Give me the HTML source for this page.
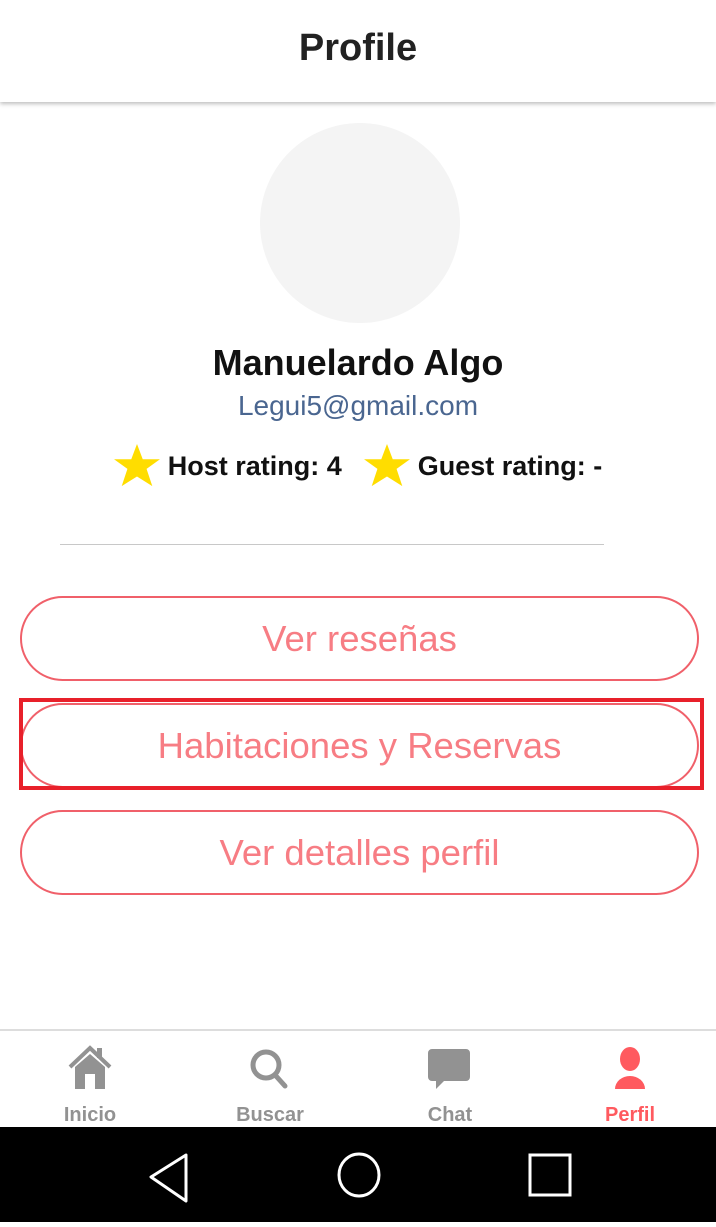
<!DOCTYPE html>
<html><head><meta charset="utf-8"><style>
*{margin:0;padding:0;box-sizing:border-box}
body{width:716px;height:1222px;position:relative;background:#fff;font-family:"Liberation Sans",sans-serif;overflow:hidden}
.hdr{position:absolute;top:0;left:0;width:716px;height:102px;background:#fff;box-shadow:0 2px 4px rgba(0,0,0,.25);text-align:center;line-height:96px;font-size:38px;font-weight:bold;color:#222}
.av{position:absolute;left:260px;top:123px;width:200px;height:200px;border-radius:50%;background:#f4f4f4}
.name{position:absolute;top:342px;width:716px;text-align:center;font-size:36px;font-weight:bold;color:#111}
.mail{position:absolute;top:390px;width:716px;text-align:center;font-size:28px;color:#4a6690}
.rat{position:absolute;top:444px;left:0;width:716px;display:flex;justify-content:center;align-items:center;font-size:27px;font-weight:bold;color:#111}
.rat svg{margin-right:8px}
.hr{position:absolute;left:60px;top:544px;width:544px;height:1px;background:#c8c8c8}
.btn{position:absolute;left:20px;width:679px;height:85px;border:2px solid #f0606a;border-radius:43px;text-align:center;line-height:81px;font-size:36.5px;color:#f77d84}
.sel{position:absolute;left:19px;top:698px;width:685px;height:92px;border:4px solid #e8202a}
.nav{position:absolute;top:1029px;left:0;width:716px;height:98px;border-top:2px solid #ddd;background:#fff}
.it{position:absolute;top:14px;width:120px;text-align:center;font-size:20px;font-weight:bold;color:#929292}
.it svg{display:block;margin:0 auto 13px}
.sys{position:absolute;top:1127px;left:0;width:716px;height:95px;background:#000}
</style></head><body>
<div class="hdr">Profile</div>
<div class="av"></div>
<div class="name">Manuelardo Algo</div>
<div class="mail">Legui5@gmail.com</div>
<div class="rat">
<svg width="46" height="44" viewBox="0 0 24 23"><path d="M12 0l3 8h9l-7 5 3 9-8-5-8 5 3-9-7-5h9z" fill="#ffdd00"/></svg>Host rating: 4<span style="width:22px"></span>
<svg width="46" height="44" viewBox="0 0 24 23"><path d="M12 0l3 8h9l-7 5 3 9-8-5-8 5 3-9-7-5h9z" fill="#ffdd00"/></svg>Guest rating: -
</div>
<div class="hr"></div>
<div class="btn" style="top:596px">Ver reseñas</div>
<div class="btn" style="top:703px">Habitaciones y Reservas</div>
<div class="sel"></div>
<div class="btn" style="top:810px">Ver detalles perfil</div>
<div class="nav">
<div class="it" style="left:30px"><svg width="48" height="46" viewBox="0 0 48 46"><path d="M4 22L24 3l20 19" stroke="#929292" stroke-width="4" fill="none"/><rect x="31" y="3" width="5" height="10" fill="#929292"/><path d="M9 22L24 9l15 13v22H29V29H19v15H9z" fill="#929292"/></svg>Inicio</div>
<div class="it" style="left:210px"><svg width="48" height="46" viewBox="0 0 48 46"><circle cx="20" cy="20" r="13" stroke="#929292" stroke-width="5" fill="none"/><path d="M30 31l9 10" stroke="#929292" stroke-width="5" stroke-linecap="round"/></svg>Buscar</div>
<div class="it" style="left:390px"><svg width="48" height="46" viewBox="0 0 48 46"><path d="M6 4h34a4 4 0 0 1 4 4v24a4 4 0 0 1-4 4H18l-8 8v-8H6a4 4 0 0 1-4-4V8a4 4 0 0 1 4-4z" fill="#929292"/></svg>Chat</div>
<div class="it" style="left:570px;color:#ff5a5f"><svg width="48" height="46" viewBox="0 0 48 46"><ellipse cx="24" cy="14" rx="10" ry="12" fill="#ff5a5f"/><path d="M9 44a15 13 0 0 1 30 0z" fill="#ff5a5f"/></svg>Perfil</div>
</div>
<div class="sys">
<svg width="716" height="95"><path d="M186 28L151 50l35 24z" stroke="#fff" stroke-width="3" fill="none" stroke-linejoin="round"/><ellipse cx="359" cy="48" rx="20" ry="21" stroke="#fff" stroke-width="3" fill="none"/><rect x="530" y="28" width="40" height="40" stroke="#fff" stroke-width="3" fill="none"/></svg>
</div>
</body></html>
